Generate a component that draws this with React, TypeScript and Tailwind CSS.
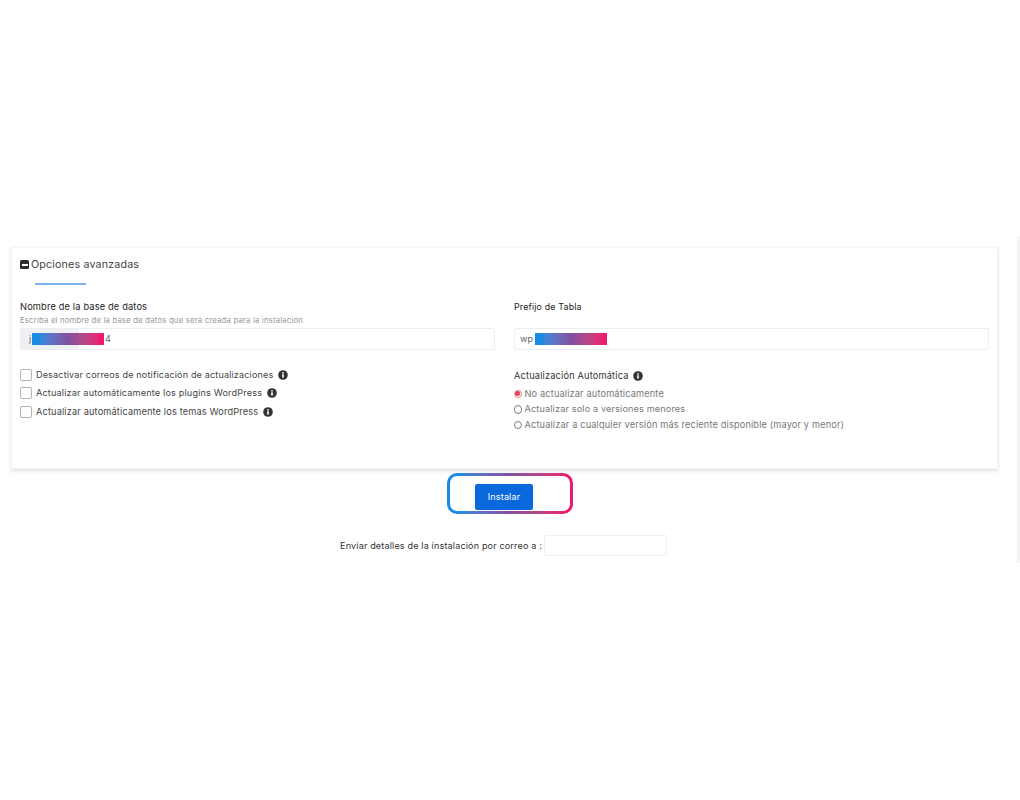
import React from "react";

const Info = () => (
  <svg width="10" height="10" viewBox="0 0 10 10" className="shrink-0">
    <circle cx="5" cy="5" r="4.8" fill="#333" />
    <rect x="4.2" y="4.2" width="1.6" height="3.4" fill="#fff" />
    <rect x="4.2" y="2.2" width="1.6" height="1.4" fill="#fff" />
  </svg>
);

const Check = ({ label, size }: { label: string; size: string }) => (
  <div className="flex items-center h-[18.5px]">
    <span className="w-[12px] h-[12px] mr-[4px] rounded-[2px] border border-[#b4b4b4] bg-white shrink-0" />
    <span className={`text-[#444] ${size}`}>{label}</span>
    <span className="ml-[5px]"><Info /></span>
  </div>
);

const Radio = ({ label, on, size }: { label: string; on?: boolean; size: string }) => (
  <div className="flex items-center h-[15.5px]">
    <span className={`w-[8.5px] h-[8.5px] rounded-full border mr-[2.5px] -ml-[0.5px] shrink-0 flex items-center justify-center ${on ? "border-[#e88] " : "border-[#808080]"}`}>
      {on && <span className="w-[5px] h-[5px] rounded-full bg-[#e5405e]" />}
    </span>
    <span className={`text-[#777] ${size}`}>{label}</span>
  </div>
);

const Bar = ({ w }: { w: string }) => (
  <span className={`h-[12px] bg-gradient-to-r from-[#1a8ae2] from-10% via-[#80509f] to-[#ec1a70] to-95% ${w}`} />
);

export default function App() {
  return (
    <div className="relative min-h-[800px] bg-white pt-[247px] font-['Inter','Liberation_Sans',sans-serif] tracking-[0.01em]">
      <div className="absolute right-0 top-[236px] w-[3px] h-[327px] bg-[#f2f4f7]" />
      <div className="flex">
        <div className="ml-[11px] w-[987px] h-[222px] bg-white border border-[#f4f5f7] shadow-[0_2px_4px_rgba(0,0,0,0.12)] px-[8px]">
          <div className="flex items-center mt-[10px] h-[14px]">
            <span className="w-[9px] h-[9px] -mt-[1px] rounded-[1.5px] bg-[#2d2d2d] flex items-center justify-center mr-[2px]">
              <span className="w-[6px] h-[2px] bg-white" />
            </span>
            <span className="text-[10.7px] text-[#444]">Opciones avanzadas</span>
          </div>
          <div className="ml-[15px] mt-[11px] w-[51px] h-[2px] bg-[#7db5ea]" />
          <div className="grid grid-cols-[475px_475px] gap-x-[19px] mt-[16px]">
            <div>
              <div className="text-[9.25px] h-[12px] leading-[12px] text-[#222]">Nombre de la base de datos</div>
              <div className="text-[7.8px] h-[10px] leading-[10px] mt-[2px] text-[#999]">Escriba el nombre de la base de datos que será creada para la instalación</div>
              <div className="relative h-[22px] mt-[3px] border border-[#eceef0] rounded-[2px] flex items-center">
                <span className="absolute left-0 top-0 bottom-0 w-[58px] bg-[#eef0f3]" />
                <span className="relative ml-[8px] text-[9px] text-[#666] w-[3px]">j</span>
                <Bar w="relative w-[72px]" />
                <span className="relative text-[9px] text-[#666] ml-[1px]">4</span>
              </div>
            </div>
            <div>
              <div className="text-[8.9px] h-[12px] leading-[12px] text-[#222]">Prefijo de Tabla</div>
              <div className="h-[10px] mt-[2px]" />
              <div className="h-[22px] mt-[3px] border border-[#eceef0] rounded-[2px] flex items-center">
                <span className="ml-[5px] text-[9px] text-[#666] w-[15px]">wp</span>
                <Bar w="w-[72px]" />
              </div>
            </div>
            <div className="mt-[15.5px]">
              <Check size="text-[9.05px]" label="Desactivar correos de notificación de actualizaciones" />
              <Check size="text-[9.15px]" label="Actualizar automáticamente los plugins WordPress" />
              <Check size="text-[9.2px]" label="Actualizar automáticamente los temas WordPress" />
            </div>
            <div className="mt-[17px]">
              <div className="flex items-center h-[18px] text-[9.25px] text-[#333]">
                Actualización Automática<span className="ml-[4px]"><Info /></span>
              </div>
              <div className="mt-[1px]">
                <Radio size="text-[9.2px]" label="No actualizar automáticamente" on />
                <Radio size="text-[9.1px]" label="Actualizar solo a versiones menores" />
                <Radio size="text-[9.2px]" label="Actualizar a cualquier versión más reciente disponible (mayor y menor)" />
              </div>
            </div>
          </div>
        </div>
      </div>
      <div className="flex justify-center w-[1020px] mt-[4px]">
        <div className="w-[126px] h-[41px] rounded-[10px] p-[3px] bg-gradient-to-r from-[#1a8ae2] from-10% via-[#80509f] to-[#ec1a70] to-95%">
          <div className="w-full h-full bg-white rounded-[7px] flex items-end pl-[25px] pb-[1px]">
            <div className="w-[58px] h-[26px] rounded-[2px] bg-[#0a68dd] text-white text-[9px] flex items-center justify-center">Instalar</div>
          </div>
        </div>
      </div>
      <div className="flex items-center justify-center w-[1007px] mt-[21px] text-[9.05px] text-[#333]">
        <span>Enviar detalles de la instalación por correo a :</span>
        <span className="ml-[2px] w-[123px] h-[21px] border border-[#eef0f2] rounded-[2px]" />
      </div>
    </div>
  );
}
